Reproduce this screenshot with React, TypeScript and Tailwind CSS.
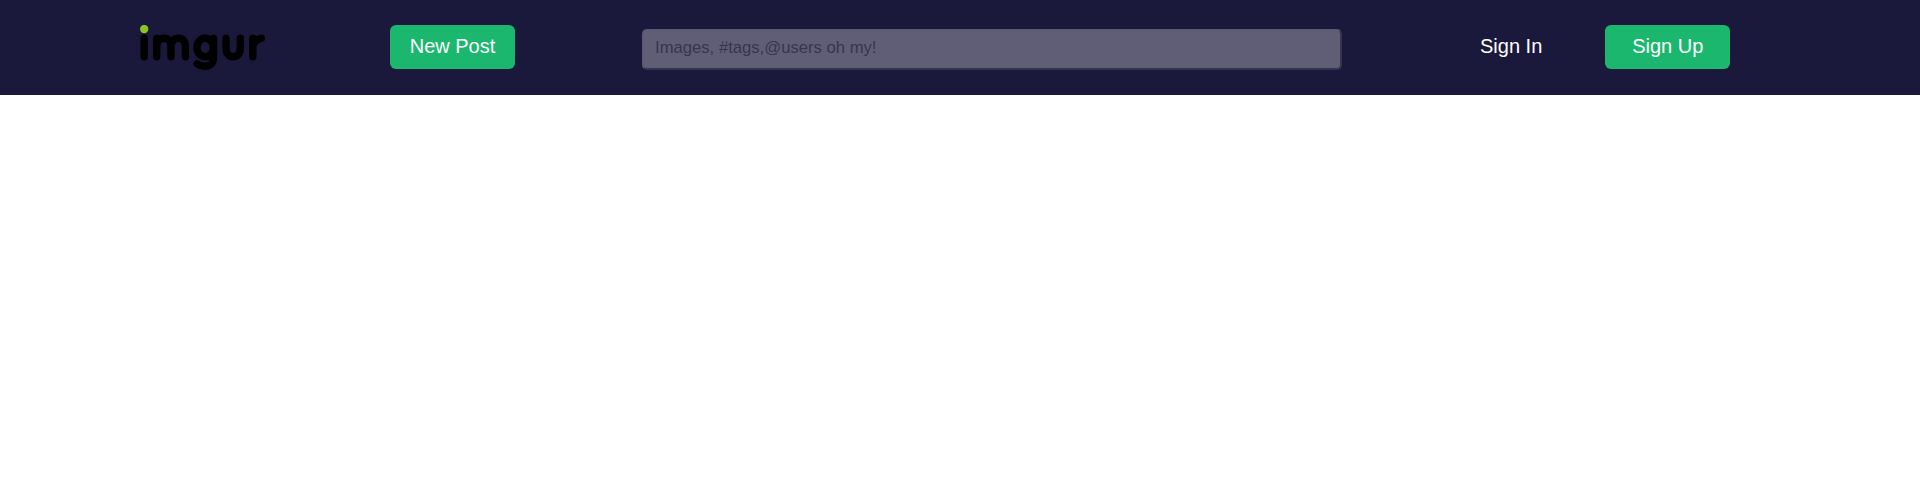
function Logo() {
  return (
    <svg className="h-[46px] w-[125px] shrink-0" viewBox="0 0 125 46" role="img" aria-label="imgur">
      <circle cx="4.2" cy="4" r="4.2" fill="#89c623" />
      <g fill="none" stroke="#000" strokeWidth="7.4" strokeLinecap="round" strokeLinejoin="round">
        <path d="M4.200 13.300V31.800" />
        <path d="M16.700 31.800V13.400M16.700 20.500C17.500 15.500 20.500 13.300 24 13.300C28.500 13.300 31 16.200 31 21V31.800M31 21C31.500 16 34.500 13.300 38.300 13.300C42.800 13.300 45.400 16.200 45.400 21V31.800" />
        <path d="M73.500 13.400V32.500C73.500 38.500 70 41.200 65 41.200C62 41.200 59.500 40.300 57.300 39" />
        <ellipse cx="65.200" cy="22.500" rx="8.300" ry="9.300" />
        <path d="M86 13.300V23C86 28.800 88.800 31.700 93.200 31.700C97.600 31.700 100.300 28.800 100.300 23V13.300" />
        <path d="M112.800 31.800V13.400M112.800 22C113.300 17.500 116 14.300 121.200 13.300" />
      </g>
    </svg>
  );
}

export default function App() {
  return (
    <div className="min-h-screen bg-white font-['Liberation_Sans',Arial,sans-serif]">
      <header className="flex h-[95px] items-start bg-[#1a183b] pl-[140px] pt-[25px] text-xl text-white">
        <Logo />
        <button className="ml-[125px] h-11 w-[125px] shrink-0 rounded-md bg-[#1bb76e] pb-0.5">New Post</button>
        <input
          className="ml-[127px] mt-1 h-[41px] w-[700px] shrink-0 rounded-[5px] border-2 border-t-[#5c5a73] border-r-[#36354d] border-b-[#36354d] border-l-[#5c5a73] bg-[#5f5e76] px-[11px] pb-1 text-[16.67px] text-white placeholder:text-[#36354f]"
          placeholder="Images, #tags,@users oh my!"
        />
        <a href="#" className="ml-[138px] flex h-11 shrink-0 items-center pb-0.5">Sign In</a>
        <button className="ml-[63px] h-11 w-[125px] shrink-0 rounded-md bg-[#1bb76e] pb-0.5">Sign Up</button>
      </header>
    </div>
  );
}
